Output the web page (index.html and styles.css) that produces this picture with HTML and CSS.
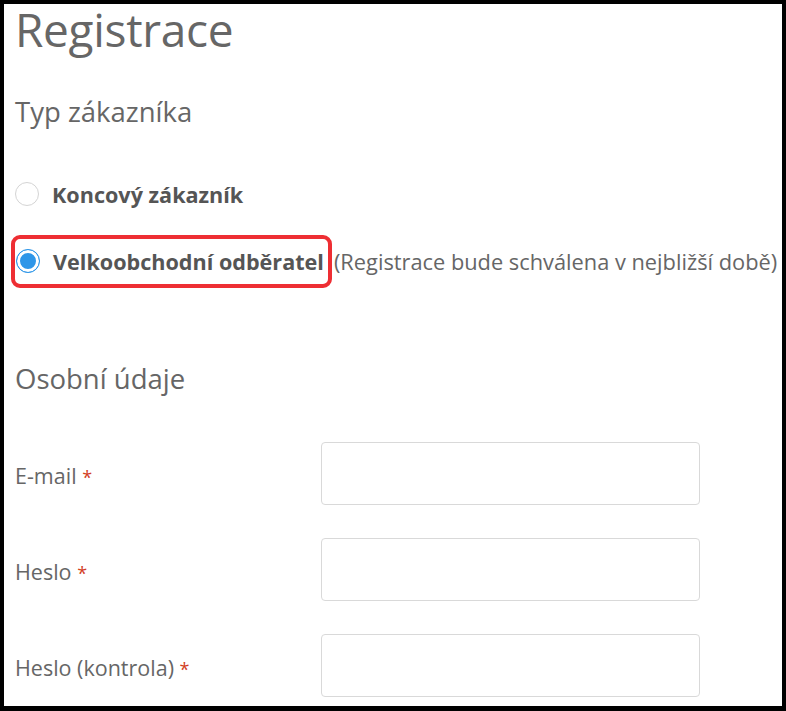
FILE: index.html
```html
<!DOCTYPE html>
<html lang="cs">
<head>
<meta charset="utf-8">
<link rel="stylesheet" href="styles.css">
</head>
<body>
<div class="frame">
  <h1 class="title">Registrace</h1>
  <h2 class="section">Typ zákazníka</h2>
  <div class="radios">
    <label class="radio-row">
      <span class="radio"></span>
      <span class="radio-label">Koncový zákazník</span>
    </label>
    <div class="radio-row second">
      <label class="highlight">
        <span class="radio checked"></span>
        <span class="radio-label">Velkoobchodní odběratel</span>
      </label>
      <span class="note">(Registrace bude schválena v nejbližší době)</span>
    </div>
  </div>
  <h2 class="section personal">Osobní údaje</h2>
  <div class="form">
    <div class="row"><span class="label">E-mail <span class="req">*</span></span><span class="input"></span></div>
    <div class="row"><span class="label">Heslo <span class="req">*</span></span><span class="input"></span></div>
    <div class="row"><span class="label">Heslo (kontrola) <span class="req">*</span></span><span class="input"></span></div>
  </div>
</div>
</body>
</html>
```
FILE: styles.css
```css
html, body { margin: 0; padding: 0; background: #fff; }
.frame {
  box-sizing: border-box;
  width: 786px;
  height: 711px;
  border: 4px solid #000;
  border-bottom-width: 5px;
  padding: 0 0 0 11px;
  font-family: "Open Sans", sans-serif;
  color: #5b5b5b;
}
.title {
  margin: 0;
  font-family: "Open Sans", sans-serif;
  font-weight: 400;
  font-size: 46px;
  line-height: 50px;
  color: #666;
  letter-spacing: -0.3px;
}
.section {
  margin: 41px 0 0;
  font-family: "Open Sans", sans-serif;
  font-weight: 400;
  font-size: 27.5px;
  line-height: 34px;
  color: #666;
}
.radios { margin-top: 47px; }
.radio-row {
  display: flex;
  align-items: center;
  height: 36px;
}
.radio-row.second { margin-top: 31px; margin-left: -4px; }
.highlight {
  display: inline-flex;
  align-items: center;
  border: 4px solid #ee2e33;
  border-radius: 9px;
  height: 53px;
  box-sizing: border-box;
  padding: 0 4px 0 1px;
}
.radio {
  box-sizing: border-box;
  width: 24px;
  height: 24px;
  border-radius: 50%;
  border: 1px solid #d4d4d4;
  background: #fff;
  margin-right: 13px;
  flex: none;
}
.radio.checked {
  border: 1px solid #2e96e8;
  box-shadow: inset 0 0 0 3px #fff;
  background: #2e96e8;
}
.radio-label {
  font-weight: 700;
  font-size: 21.6px;
  color: #555;
}
.note {
  font-size: 21.8px;
  color: #666;
  margin-left: 2px;
  white-space: nowrap;
}
.personal { margin-top: 83px; }
.form { margin-top: 46px; }
.row {
  display: grid;
  grid-template-columns: 306px 379px;
  align-items: center;
  height: 63px;
  margin-bottom: 33px;
}
.label {
  font-size: 21.5px;
  color: #666;
  padding-top: 4px;
}
.req { color: #d2401f; font-size: 18px; }
.input {
  display: block;
  box-sizing: border-box;
  height: 63px;
  border: 1px solid #d9d9d9;
  border-radius: 4px;
  background: #fff;
}
```
